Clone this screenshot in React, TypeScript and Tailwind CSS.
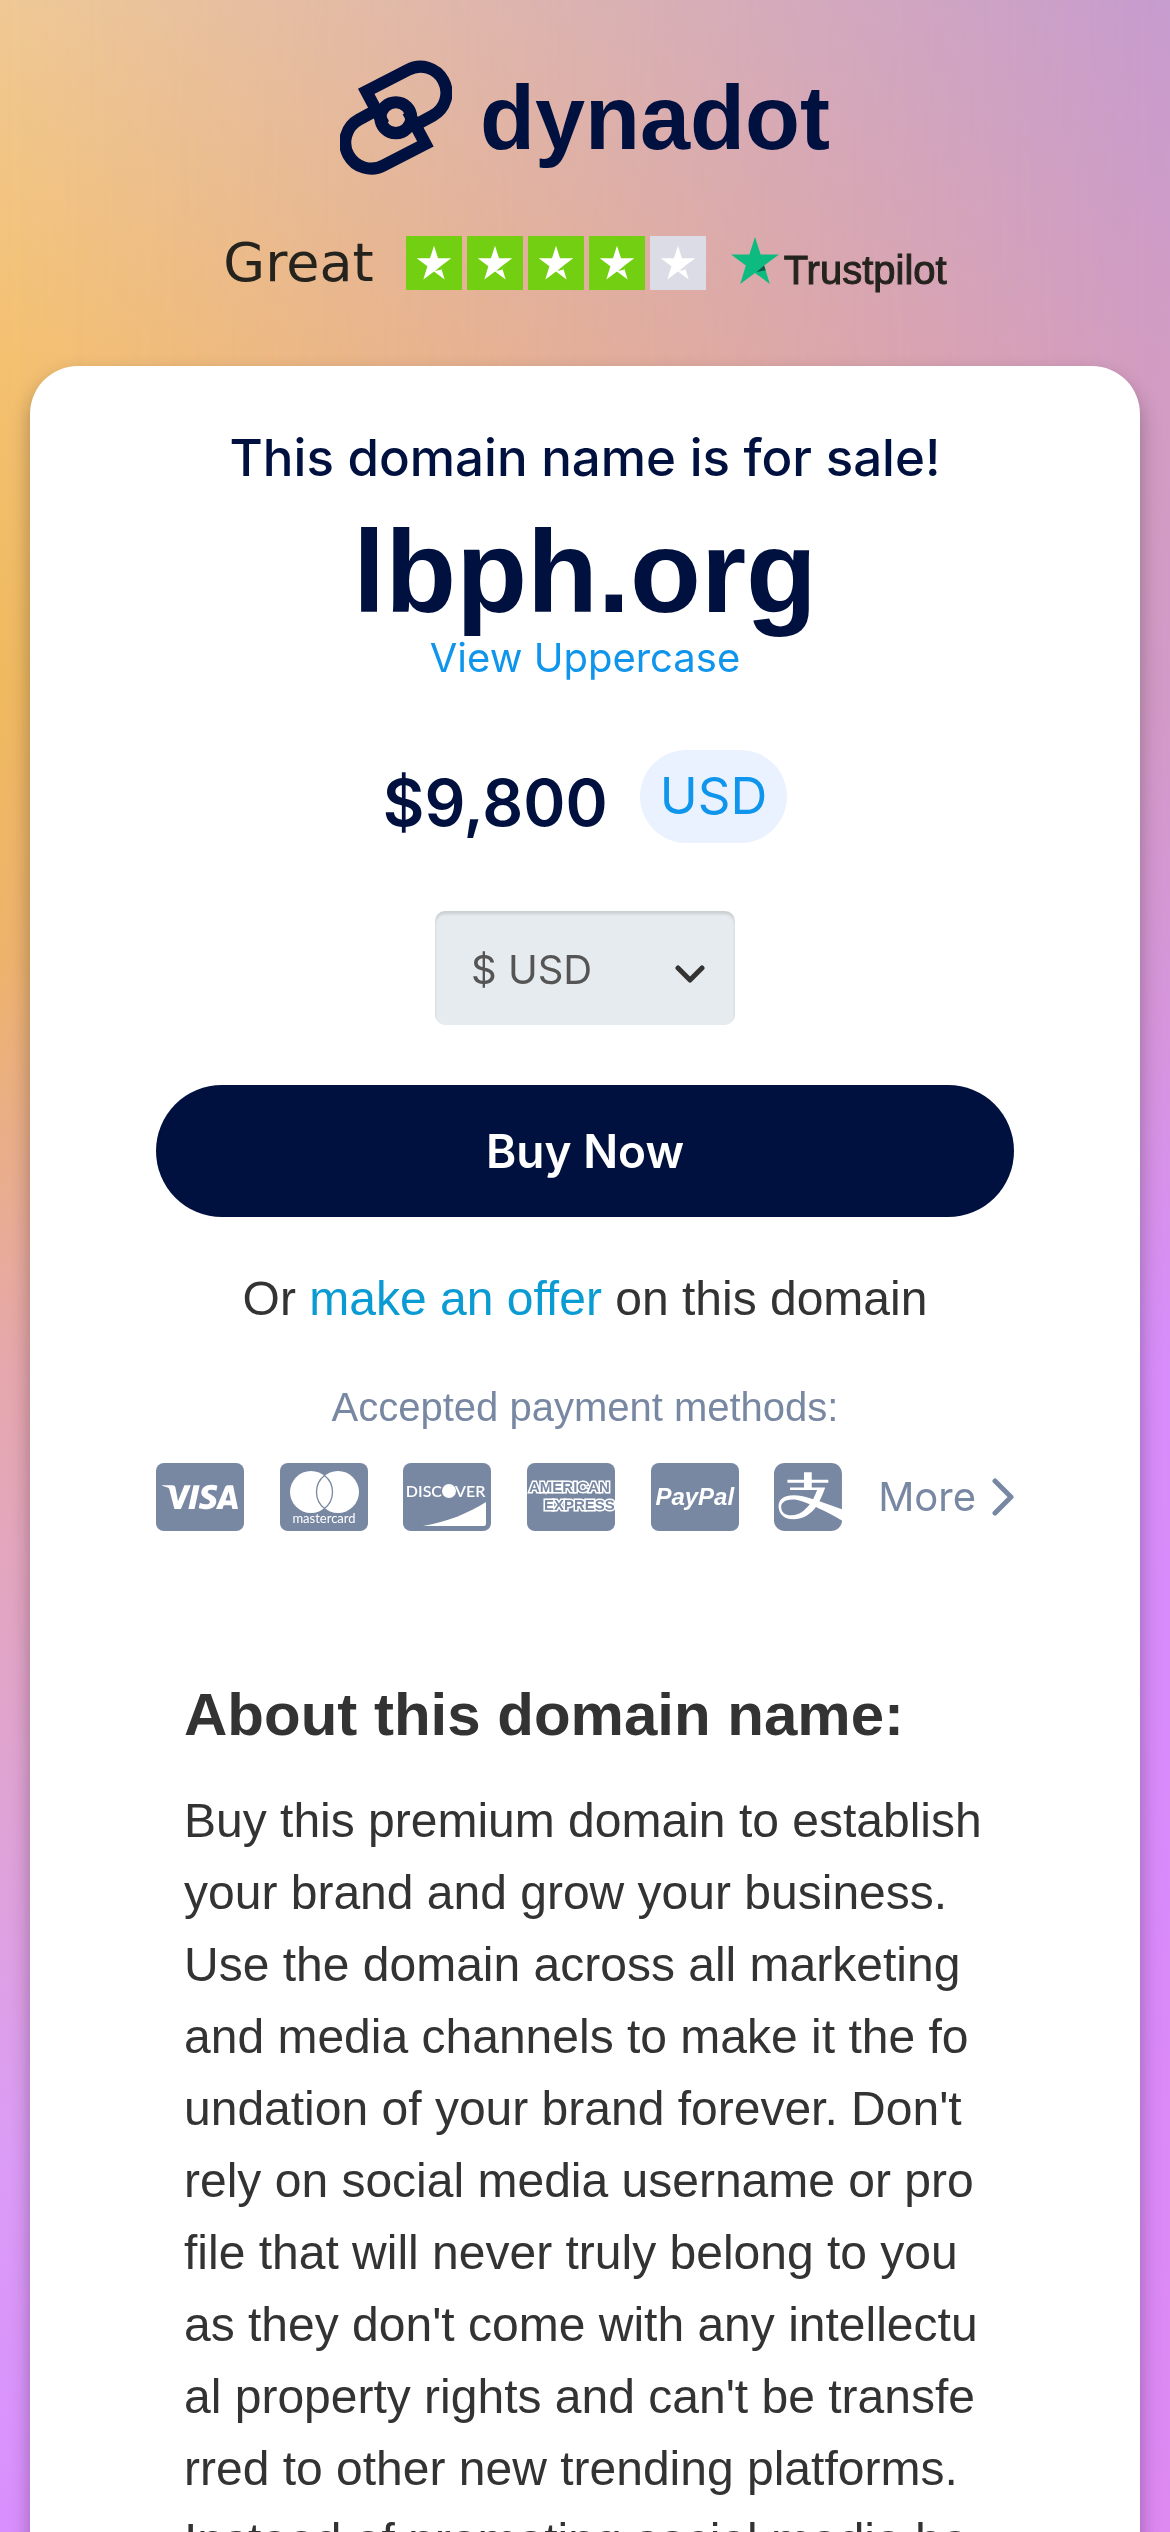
import { useState } from "react";
import { FaAlipay } from "react-icons/fa";
import { SiVisa } from "react-icons/si";

const ratingStars = [true, true, true, true, false];

const aboutLines = [
  "Buy this premium domain to establish",
  "your brand and grow your business.",
  "Use the domain across all marketing",
  "and media channels to make it the fo",
  "undation of your brand forever. Don't",
  "rely on social media username or pro",
  "file that will never truly belong to you",
  "as they don't come with any intellectu",
  "al property rights and can't be transfe",
  "rred to other new trending platforms.",
  "Instead of promoting social media ha",
];

function Background() {
  return (
    <div
      aria-hidden="true"
      className="fixed inset-0 -z-10 bg-[linear-gradient(to_bottom,#c79ccf_0%,#d29cc4_14%,#d29ac8_28%,#d695dc_40%,#d78dfb_54%,#d98afa_75%,#de89f2_100%)]"
    >
      <div className="h-full w-full bg-[linear-gradient(to_bottom,#efc894_0%,#f4c170_14%,#efb95f_27%,#edb36c_38%,#e6a8ac_54%,#e0a4d2_70%,#db9cf6_85%,#d98ffe_100%)] [mask-image:linear-gradient(to_right,black,transparent)]" />
    </div>
  );
}

function Logo() {
  return (
    <a href="#" className="flex h-[116px] items-center justify-center gap-7 text-[#00103f]">
      <svg viewBox="56 59 333 342" className="h-[116px] w-28" aria-hidden="true">
        <g fill="none" stroke="currentColor" strokeWidth="36">
          <path d="M186 248 L134 151 L258 87 A77 77 0 0 1 332 223 L284 249" />
          <path d="M258 210 L310 307 L186 371 A77 77 0 0 1 112 235 L160 209" />
          <circle cx="222" cy="229" r="46" />
        </g>
      </svg>
      <span className="text-[90px] leading-none font-bold">dynadot</span>
    </a>
  );
}

function Star({ className, notch }: { className: string; notch: string }) {
  return (
    <svg viewBox="0 0 24 24" className={className} aria-hidden="true">
      <path
        fill="currentColor"
        d="M12 .5 14.7 8.9H23.5L16.4 14.1 19.1 23 12 17.7 4.9 23 7.6 14.1.5 8.9H9.3Z"
      />
      <path fill={notch} d="M16.4 14.1 17.1 16.4 12.8 17.3Z" />
    </svg>
  );
}

function Rating() {
  return (
    <div className="mt-15 flex h-[54px] items-center justify-center">
      <span className="font-['DejaVu_Sans',sans-serif] text-[54px] leading-[54px] text-[#25231d]">
        Great
      </span>
      <div className="ml-8 flex gap-[5px]">
        {ratingStars.map((filled, i) => (
          <span
            key={i}
            className={
              filled
                ? "flex h-[54px] w-14 items-center justify-center bg-[#73cf11] text-white"
                : "flex h-[54px] w-14 items-center justify-center bg-[#dcdce6] text-white"
            }
          >
            <Star className="size-9" notch={filled ? "#73cf11" : "#dcdce6"} />
          </span>
        ))}
      </div>
      <Star className="ml-6 size-[50px] self-start text-[#0dba7f]" notch="#0b5a45" />
      <span className="ml-1 self-end text-[40px] leading-10 text-[#25231d] [-webkit-text-stroke:1px_#25231d]">
        Trustpilot
      </span>
    </div>
  );
}

function Mastercard() {
  return (
    <svg viewBox="0 0 88 68" className="h-[68px] w-[88px]" role="img" aria-label="Mastercard">
      <rect width="88" height="68" rx="8" fill="#7888a3" />
      <circle cx="31" cy="29" r="21" fill="#fff" />
      <circle cx="58" cy="29" r="21" fill="#fff" />
      <path
        d="M44.500 12.500A21 21 0 0 1 44.500 45.500A21 21 0 0 1 44.500 12.500Z"
        fill="none"
        stroke="#7888a3"
        strokeWidth="1.300"
      />
      <text x="44" y="60" textAnchor="middle" fontFamily="Lato, sans-serif" fontSize="13" fill="#fff">
        mastercard
      </text>
    </svg>
  );
}

function Discover() {
  return (
    <svg viewBox="0 0 88 68" className="h-[68px] w-[88px]" role="img" aria-label="Discover">
      <rect width="88" height="68" rx="8" fill="#7888a3" />
      <g fontFamily="Lato, sans-serif" fontSize="16" fontWeight="600" fill="#fff">
        <text x="39" y="34" textAnchor="end">
          DISC
        </text>
        <text x="52" y="34">
          VER
        </text>
      </g>
      <circle cx="46" cy="28" r="7" fill="#fff" />
      <path d="M20 63C44 59 66 50 83 39V61Q83 63 81 63Z" fill="#fff" />
    </svg>
  );
}

function Amex() {
  return (
    <svg viewBox="0 0 88 68" className="h-[68px] w-[88px]" role="img" aria-label="American Express">
      <rect width="88" height="68" rx="8" fill="#7888a3" />
      <g
        fontFamily="Liberation Sans, sans-serif"
        fontSize="15"
        fontWeight="700"
        fill="#7888a3"
        stroke="#fff"
        strokeWidth="3"
        paintOrder="stroke"
      >
        <text x="2" y="29">
          AMERICAN
        </text>
        <text x="17" y="47">
          EXPRESS
        </text>
      </g>
    </svg>
  );
}

function PaymentMethods() {
  return (
    <div className="mt-7 flex h-[68px] items-center justify-between text-[#7888a3]">
      <span className="flex h-[68px] w-[88px] items-center justify-center rounded-lg bg-[#7888a3] text-white">
        <SiVisa className="size-[76px]" aria-label="Visa" />
      </span>
      <Mastercard />
      <Discover />
      <Amex />
      <span className="flex h-[68px] w-[88px] items-center justify-center rounded-lg bg-[#7888a3] text-2xl font-bold text-white italic">
        PayPal
      </span>
      <FaAlipay className="h-[78px] w-[68px]" aria-label="Alipay" />
      <a href="#" className="flex items-center gap-4 font-['Inter',sans-serif] text-[40px] leading-12">
        More
        <svg viewBox="0 0 22 38" className="h-[38px] w-[22px]" aria-hidden="true">
          <path
            d="M3 3 19 19 3 35"
            fill="none"
            stroke="currentColor"
            strokeWidth="5"
            strokeLinecap="round"
            strokeLinejoin="round"
          />
        </svg>
      </a>
    </div>
  );
}

function CurrencySelect() {
  const [currency, setCurrency] = useState("USD");

  return (
    <div className="relative mx-auto mt-17 w-[300px]">
      <select
        id="currency"
        aria-label="Currency"
        value={currency}
        onChange={(e) => setCurrency(e.target.value)}
        className="h-[114px] w-full appearance-none rounded-[10px] bg-[#e6ebef] pt-1 pl-9 font-['Inter',sans-serif] text-[40px] text-[#555] shadow-[inset_0_3px_3px_rgba(0,0,0,0.12)]"
      >
        <option value="USD">$ USD</option>
        <option value="EUR">€ EUR</option>
        <option value="GBP">£ GBP</option>
      </select>
      <svg
        viewBox="0 0 30 18"
        className="pointer-events-none absolute top-[54px] right-[30px] h-[18px] w-[30px]"
        aria-hidden="true"
      >
        <path
          d="M3 3 15 15 27 3"
          fill="none"
          stroke="#333"
          strokeWidth="5"
          strokeLinecap="round"
          strokeLinejoin="round"
        />
      </svg>
    </div>
  );
}

export default function App() {
  return (
    <div className="relative min-h-screen px-[30px] pt-15 font-['Liberation_Sans',sans-serif]">
      <Background />
      <header>
        <Logo />
        <Rating />
      </header>

      <main className="mt-19 rounded-t-[48px] bg-white px-[126px] pt-15 pb-20 text-center text-[#333] shadow-[0_10px_20px_rgba(0,0,0,0.3)]">
        <p className="font-['Inter',sans-serif] text-[51px] leading-16 font-medium whitespace-nowrap text-[#00103f]">
          This domain name is for sale!
        </p>
        <h1 className="mt-5 text-[116px] leading-[124px] font-bold text-[#00103f]">lbph.org</h1>
        <a
          href="#"
          className="block font-['Inter',sans-serif] text-[40px] leading-12 text-[#1095ec]"
        >
          View Uppercase
        </a>

        <div className="mt-17 flex items-end justify-center gap-8 font-['Inter',sans-serif]">
          <span className="text-[64px] leading-20 font-semibold text-[#00103f]">$9,800</span>
          <span className="flex h-[93px] items-center rounded-full bg-[#eaf2ff] px-5 text-[51px] text-[#1095ec]">
            USD
          </span>
        </div>

        <CurrencySelect />

        <button
          type="button"
          className="mt-15 h-33 w-full rounded-full bg-[#00103f] font-['Inter',sans-serif] text-[46px] font-semibold text-white"
        >
          Buy Now
        </button>

        <p className="mt-[46px] text-5xl leading-18">
          Or{" "}
          <a href="#" className="text-[#0b9bd3]">
            make an offer
          </a>{" "}
          on this domain
        </p>

        <p className="mt-11 text-[40px] leading-14 text-[#7888a3]">Accepted payment methods:</p>
        <PaymentMethods />

        <section className="mt-36 pl-7 text-left">
          <h2 className="text-6xl leading-20 font-bold">About this domain name:</h2>
          <p className="mt-[30px] text-5xl leading-18 whitespace-nowrap">
            {aboutLines.map((line) => (
              <span key={line} className="block">
                {line}
              </span>
            ))}
          </p>
        </section>
      </main>
    </div>
  );
}
